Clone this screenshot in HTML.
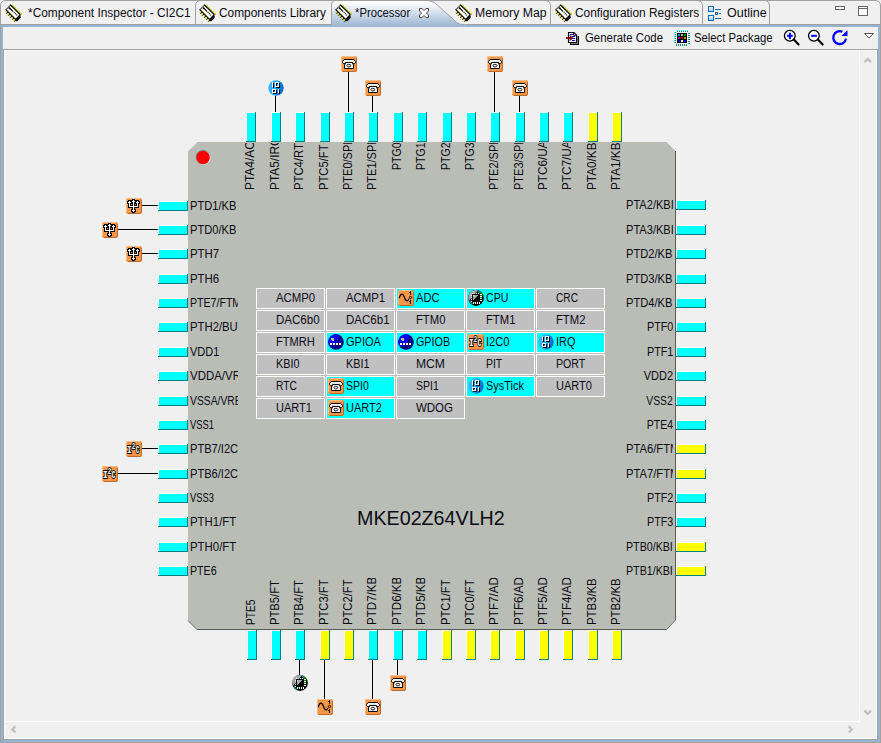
<!DOCTYPE html><html><head><meta charset="utf-8"><title>Processor</title>
<style>
html,body{margin:0;padding:0}
body{width:881px;height:743px;overflow:hidden;background:#f0f0f0;position:relative;font-family:"Liberation Sans",sans-serif;font-size:12px;color:#0b0b14}
#g{position:absolute;left:0;top:0}
.t{position:absolute;white-space:nowrap;line-height:14px;height:14px}
.pl{position:absolute;white-space:nowrap;line-height:14px;height:14px;width:47px;overflow:hidden}
.r{text-align:right}
.s{display:inline-block;transform-origin:0 0;white-space:nowrap;text-indent:0}
.r .s{transform-origin:100% 0}
.v{transform-origin:0 0;transform:rotate(-90deg)}
.big{position:absolute;white-space:nowrap;font-size:20.6px;line-height:24px}
</style></head><body>
<svg id="g" width="881" height="743" viewBox="0 0 881 743">
<defs><linearGradient id="tabg" x1="0" x2="0" y1="0" y2="1"><stop offset="0" stop-color="#ffffff"/><stop offset="0.15" stop-color="#f4f7fb"/><stop offset="1" stop-color="#99b4d1"/></linearGradient></defs>
<g shape-rendering="crispEdges">
<rect x="1" y="25" width="879" height="2" fill="#99b4d1"/><rect x="1" y="25" width="2" height="716" fill="#99b4d1"/><rect x="878" y="25" width="2" height="716" fill="#99b4d1"/><rect x="1" y="740" width="879" height="2" fill="#99b4d1"/>
<rect x="0" y="6" width="1" height="737" fill="#a0a0a0"/><rect x="880" y="6" width="1" height="737" fill="#a0a0a0"/><rect x="0" y="742" width="881" height="1" fill="#a0a0a0"/>
<rect x="0" y="24" width="332" height="1" fill="#a0a0a0"/><rect x="462" y="24" width="419" height="1" fill="#a0a0a0"/>
<rect x="3" y="49" width="875" height="1" fill="#a0a0a0"/><rect x="3" y="49" width="1" height="691" fill="#a0a0a0"/>
<rect x="4" y="50" width="873" height="1" fill="#fff"/><rect x="4" y="50" width="1" height="689" fill="#fff"/>
<rect x="876" y="50" width="1" height="689" fill="#fff"/><rect x="4" y="738" width="873" height="1" fill="#fff"/>
<rect x="877" y="49" width="1" height="691" fill="#a0a0a0"/><rect x="3" y="739" width="875" height="1" fill="#a0a0a0"/>
<rect x="859" y="51" width="1" height="671" fill="#fff"/><rect x="5" y="721" width="855" height="1" fill="#fff"/>
</g>
<path d="M0.5 7V6Q0.5 0.5 6 0.5H875Q880.5 0.5 880.5 6V7" fill="none" stroke="#a0a0a0" stroke-width="1"/>
<path d="M331.5 27V5Q331.5 1 336 1H426C433 1 436 3.5 440.5 8L452.5 18.5C456.5 22.5 458.5 24.5 464.5 24.5H466V27Z" fill="url(#tabg)"/>
<path d="M331.5 24.5V5Q331.5 0.5 336 0.5" fill="none" stroke="#a0a0a0"/>
<path d="M425 0.5C433 0.5 436 3.5 440.5 8L452.5 18.5C456.5 22.5 458.5 24.5 464.5 24.5" fill="none" stroke="#a0a0a0"/>
<path d="M195.5 24V6Q195.5 0.5 201 0.5" fill="none" stroke="#a0a0a0"/>
<path d="M550.5 24V6Q550.5 0.5 545.0 0.5" fill="none" stroke="#a0a0a0"/>
<path d="M702.5 24V6Q702.5 0.5 697.0 0.5" fill="none" stroke="#a0a0a0"/>
<path d="M769.5 24V6Q769.5 0.5 764.0 0.5" fill="none" stroke="#a0a0a0"/>
<g transform="translate(5 4.5)"><g><path d="M6.70 0.70l1.8 0l0 1.8z" fill="#d4d400" stroke="#c0c000" stroke-width="0.5"/><path d="M8.70 2.70l1.8 0l0 1.8z" fill="#d4d400" stroke="#c0c000" stroke-width="0.5"/><path d="M10.70 4.70l1.8 0l0 1.8z" fill="#d4d400" stroke="#c0c000" stroke-width="0.5"/><path d="M12.70 6.70l1.8 0l0 1.8z" fill="#d4d400" stroke="#c0c000" stroke-width="0.5"/><path d="M14.70 8.70l1.8 0l0 1.8z" fill="#d4d400" stroke="#c0c000" stroke-width="0.5"/><path d="M0.9 5.2L0.9 7.0L10.6 16.7L12.4 16.7L15.9 13.0L15.2 10.4L10.8 14.8Z" fill="#15151f"/><path d="M5.5 0.5L0.9 5.2L10.6 14.8L15.2 10.2Z" fill="#fff" stroke="#000" stroke-width="1.1" stroke-linejoin="round"/><path d="M4.9 1.1L1.5 4.6" stroke="#fff" stroke-width="1.2" stroke-dasharray="0.7 0.75"/><path d="M4.9 3.9L12.4 11.2" stroke="#000" stroke-width="1.1" stroke-dasharray="4.6 0.8 1 0.8 1 0.8 1 0.8"/><rect x="3.7" y="3" width="2" height="1.6" fill="#000" transform="rotate(45 4.7 3.8)"/><rect x="0.85" y="6.60" width="1.1" height="1.9" fill="#f0f000"/><rect x="0.85" y="8.30" width="1.1" height="1.1" fill="#4a4a00"/><rect x="2.85" y="8.60" width="1.1" height="1.9" fill="#f0f000"/><rect x="2.85" y="10.30" width="1.1" height="1.1" fill="#4a4a00"/><rect x="4.85" y="10.60" width="1.1" height="1.9" fill="#f0f000"/><rect x="4.85" y="12.30" width="1.1" height="1.1" fill="#4a4a00"/><rect x="6.85" y="12.60" width="1.1" height="1.9" fill="#f0f000"/><rect x="6.85" y="14.30" width="1.1" height="1.1" fill="#4a4a00"/><rect x="8.85" y="14.60" width="1.1" height="1.9" fill="#f0f000"/><rect x="8.85" y="16.30" width="1.1" height="1.1" fill="#4a4a00"/></g></g>
<g transform="translate(199 4.5)"><g><path d="M6.70 0.70l1.8 0l0 1.8z" fill="#d4d400" stroke="#c0c000" stroke-width="0.5"/><path d="M8.70 2.70l1.8 0l0 1.8z" fill="#d4d400" stroke="#c0c000" stroke-width="0.5"/><path d="M10.70 4.70l1.8 0l0 1.8z" fill="#d4d400" stroke="#c0c000" stroke-width="0.5"/><path d="M12.70 6.70l1.8 0l0 1.8z" fill="#d4d400" stroke="#c0c000" stroke-width="0.5"/><path d="M14.70 8.70l1.8 0l0 1.8z" fill="#d4d400" stroke="#c0c000" stroke-width="0.5"/><path d="M0.9 5.2L0.9 7.0L10.6 16.7L12.4 16.7L15.9 13.0L15.2 10.4L10.8 14.8Z" fill="#15151f"/><path d="M5.5 0.5L0.9 5.2L10.6 14.8L15.2 10.2Z" fill="#fff" stroke="#000" stroke-width="1.1" stroke-linejoin="round"/><path d="M4.9 1.1L1.5 4.6" stroke="#fff" stroke-width="1.2" stroke-dasharray="0.7 0.75"/><path d="M4.9 3.9L12.4 11.2" stroke="#000" stroke-width="1.1" stroke-dasharray="4.6 0.8 1 0.8 1 0.8 1 0.8"/><rect x="3.7" y="3" width="2" height="1.6" fill="#000" transform="rotate(45 4.7 3.8)"/><rect x="0.85" y="6.60" width="1.1" height="1.9" fill="#f0f000"/><rect x="0.85" y="8.30" width="1.1" height="1.1" fill="#4a4a00"/><rect x="2.85" y="8.60" width="1.1" height="1.9" fill="#f0f000"/><rect x="2.85" y="10.30" width="1.1" height="1.1" fill="#4a4a00"/><rect x="4.85" y="10.60" width="1.1" height="1.9" fill="#f0f000"/><rect x="4.85" y="12.30" width="1.1" height="1.1" fill="#4a4a00"/><rect x="6.85" y="12.60" width="1.1" height="1.9" fill="#f0f000"/><rect x="6.85" y="14.30" width="1.1" height="1.1" fill="#4a4a00"/><rect x="8.85" y="14.60" width="1.1" height="1.9" fill="#f0f000"/><rect x="8.85" y="16.30" width="1.1" height="1.1" fill="#4a4a00"/></g></g>
<g transform="translate(335 4.5)"><g><path d="M6.70 0.70l1.8 0l0 1.8z" fill="#d4d400" stroke="#c0c000" stroke-width="0.5"/><path d="M8.70 2.70l1.8 0l0 1.8z" fill="#d4d400" stroke="#c0c000" stroke-width="0.5"/><path d="M10.70 4.70l1.8 0l0 1.8z" fill="#d4d400" stroke="#c0c000" stroke-width="0.5"/><path d="M12.70 6.70l1.8 0l0 1.8z" fill="#d4d400" stroke="#c0c000" stroke-width="0.5"/><path d="M14.70 8.70l1.8 0l0 1.8z" fill="#d4d400" stroke="#c0c000" stroke-width="0.5"/><path d="M0.9 5.2L0.9 7.0L10.6 16.7L12.4 16.7L15.9 13.0L15.2 10.4L10.8 14.8Z" fill="#15151f"/><path d="M5.5 0.5L0.9 5.2L10.6 14.8L15.2 10.2Z" fill="#fff" stroke="#000" stroke-width="1.1" stroke-linejoin="round"/><path d="M4.9 1.1L1.5 4.6" stroke="#fff" stroke-width="1.2" stroke-dasharray="0.7 0.75"/><path d="M4.9 3.9L12.4 11.2" stroke="#000" stroke-width="1.1" stroke-dasharray="4.6 0.8 1 0.8 1 0.8 1 0.8"/><rect x="3.7" y="3" width="2" height="1.6" fill="#000" transform="rotate(45 4.7 3.8)"/><rect x="0.85" y="6.60" width="1.1" height="1.9" fill="#f0f000"/><rect x="0.85" y="8.30" width="1.1" height="1.1" fill="#4a4a00"/><rect x="2.85" y="8.60" width="1.1" height="1.9" fill="#f0f000"/><rect x="2.85" y="10.30" width="1.1" height="1.1" fill="#4a4a00"/><rect x="4.85" y="10.60" width="1.1" height="1.9" fill="#f0f000"/><rect x="4.85" y="12.30" width="1.1" height="1.1" fill="#4a4a00"/><rect x="6.85" y="12.60" width="1.1" height="1.9" fill="#f0f000"/><rect x="6.85" y="14.30" width="1.1" height="1.1" fill="#4a4a00"/><rect x="8.85" y="14.60" width="1.1" height="1.9" fill="#f0f000"/><rect x="8.85" y="16.30" width="1.1" height="1.1" fill="#4a4a00"/></g></g>
<g transform="translate(455 4.5)"><g><path d="M6.70 0.70l1.8 0l0 1.8z" fill="#d4d400" stroke="#c0c000" stroke-width="0.5"/><path d="M8.70 2.70l1.8 0l0 1.8z" fill="#d4d400" stroke="#c0c000" stroke-width="0.5"/><path d="M10.70 4.70l1.8 0l0 1.8z" fill="#d4d400" stroke="#c0c000" stroke-width="0.5"/><path d="M12.70 6.70l1.8 0l0 1.8z" fill="#d4d400" stroke="#c0c000" stroke-width="0.5"/><path d="M14.70 8.70l1.8 0l0 1.8z" fill="#d4d400" stroke="#c0c000" stroke-width="0.5"/><path d="M0.9 5.2L0.9 7.0L10.6 16.7L12.4 16.7L15.9 13.0L15.2 10.4L10.8 14.8Z" fill="#15151f"/><path d="M5.5 0.5L0.9 5.2L10.6 14.8L15.2 10.2Z" fill="#fff" stroke="#000" stroke-width="1.1" stroke-linejoin="round"/><path d="M4.9 1.1L1.5 4.6" stroke="#fff" stroke-width="1.2" stroke-dasharray="0.7 0.75"/><path d="M4.9 3.9L12.4 11.2" stroke="#000" stroke-width="1.1" stroke-dasharray="4.6 0.8 1 0.8 1 0.8 1 0.8"/><rect x="3.7" y="3" width="2" height="1.6" fill="#000" transform="rotate(45 4.7 3.8)"/><rect x="0.85" y="6.60" width="1.1" height="1.9" fill="#f0f000"/><rect x="0.85" y="8.30" width="1.1" height="1.1" fill="#4a4a00"/><rect x="2.85" y="8.60" width="1.1" height="1.9" fill="#f0f000"/><rect x="2.85" y="10.30" width="1.1" height="1.1" fill="#4a4a00"/><rect x="4.85" y="10.60" width="1.1" height="1.9" fill="#f0f000"/><rect x="4.85" y="12.30" width="1.1" height="1.1" fill="#4a4a00"/><rect x="6.85" y="12.60" width="1.1" height="1.9" fill="#f0f000"/><rect x="6.85" y="14.30" width="1.1" height="1.1" fill="#4a4a00"/><rect x="8.85" y="14.60" width="1.1" height="1.9" fill="#f0f000"/><rect x="8.85" y="16.30" width="1.1" height="1.1" fill="#4a4a00"/></g></g>
<g transform="translate(555 4.5)"><g><path d="M6.70 0.70l1.8 0l0 1.8z" fill="#d4d400" stroke="#c0c000" stroke-width="0.5"/><path d="M8.70 2.70l1.8 0l0 1.8z" fill="#d4d400" stroke="#c0c000" stroke-width="0.5"/><path d="M10.70 4.70l1.8 0l0 1.8z" fill="#d4d400" stroke="#c0c000" stroke-width="0.5"/><path d="M12.70 6.70l1.8 0l0 1.8z" fill="#d4d400" stroke="#c0c000" stroke-width="0.5"/><path d="M14.70 8.70l1.8 0l0 1.8z" fill="#d4d400" stroke="#c0c000" stroke-width="0.5"/><path d="M0.9 5.2L0.9 7.0L10.6 16.7L12.4 16.7L15.9 13.0L15.2 10.4L10.8 14.8Z" fill="#15151f"/><path d="M5.5 0.5L0.9 5.2L10.6 14.8L15.2 10.2Z" fill="#fff" stroke="#000" stroke-width="1.1" stroke-linejoin="round"/><path d="M4.9 1.1L1.5 4.6" stroke="#fff" stroke-width="1.2" stroke-dasharray="0.7 0.75"/><path d="M4.9 3.9L12.4 11.2" stroke="#000" stroke-width="1.1" stroke-dasharray="4.6 0.8 1 0.8 1 0.8 1 0.8"/><rect x="3.7" y="3" width="2" height="1.6" fill="#000" transform="rotate(45 4.7 3.8)"/><rect x="0.85" y="6.60" width="1.1" height="1.9" fill="#f0f000"/><rect x="0.85" y="8.30" width="1.1" height="1.1" fill="#4a4a00"/><rect x="2.85" y="8.60" width="1.1" height="1.9" fill="#f0f000"/><rect x="2.85" y="10.30" width="1.1" height="1.1" fill="#4a4a00"/><rect x="4.85" y="10.60" width="1.1" height="1.9" fill="#f0f000"/><rect x="4.85" y="12.30" width="1.1" height="1.1" fill="#4a4a00"/><rect x="6.85" y="12.60" width="1.1" height="1.9" fill="#f0f000"/><rect x="6.85" y="14.30" width="1.1" height="1.1" fill="#4a4a00"/><rect x="8.85" y="14.60" width="1.1" height="1.9" fill="#f0f000"/><rect x="8.85" y="16.30" width="1.1" height="1.1" fill="#4a4a00"/></g></g>
<defs><linearGradient id="olg" x1="0" y1="0" x2="0" y2="1"><stop offset="0" stop-color="#ffffff"/><stop offset="1" stop-color="#8fc4f7"/></linearGradient></defs><g transform="translate(708 6)" shape-rendering="crispEdges"><rect x="0.5" y="0.5" width="5" height="5" fill="url(#olg)" stroke="#1467b0"/><rect x="0.5" y="9.5" width="5" height="5" fill="url(#olg)" stroke="#1467b0"/><path d="M7 3.5H13M7 12.5H13M11 7.5H13" stroke="#2b6ca6" stroke-width="1"/><rect x="7.5" y="6.5" width="2" height="2" fill="#fff" stroke="#1467b0"/></g>
<path d="M419.5 8.5H422L424 10.5L426 8.5H428.5V11L426.5 13L428.5 15V17.5H426L424 15.5L422 17.5H419.5V15L421.5 13L419.5 11Z" fill="#fff" stroke="#4a4a4a" stroke-width="1" stroke-linejoin="miter"/>
<g shape-rendering="crispEdges"><rect x="835.5" y="6.5" width="9" height="3" fill="#fff" stroke="#666"/><rect x="858.5" y="6.5" width="9" height="9" fill="#fff" stroke="#666"/><rect x="858" y="8" width="10" height="1" fill="#666"/></g>
<g transform="translate(566 31)"><path d="M4.5 11V13.5H12.5V5.5L10.5 4V11.5Z" fill="#808080"/><path d="M4.5 12V13.5H12.5V5" fill="none" stroke="#000" stroke-width="1.1"/><path d="M2.5 1.5H8L10.5 4V11.5H2.5Z" fill="#fff" stroke="#000" stroke-width="1.1"/><path d="M7.5 1.8V4.3H10.2" fill="none" stroke="#000" stroke-width="0.9"/><path d="M4 3.5H7M6 5.5H9M6 7.5H9M6 9.5H9" stroke="#0000ff" stroke-width="1"/><path d="M0 7H6" stroke="#800000" stroke-width="1.8"/><path d="M3.6 3.8L7.2 7L3.6 10.2Z" fill="#800000"/></g>
<g transform="translate(674 30)" shape-rendering="crispEdges"><rect x="3" y="3" width="10" height="10" fill="#000"/><rect x="3" y="0" width="1" height="1" fill="#00ffff"/><rect x="3" y="1" width="1" height="1" fill="#008080"/><rect x="2" y="14" width="1" height="2" fill="#008080"/><rect x="0" y="2" width="1" height="1" fill="#00ffff"/><rect x="1" y="2" width="1" height="1" fill="#008080"/><rect x="14" y="3" width="2" height="1" fill="#008080"/><rect x="5" y="0" width="1" height="1" fill="#00ffff"/><rect x="5" y="1" width="1" height="1" fill="#008080"/><rect x="4" y="14" width="1" height="2" fill="#008080"/><rect x="0" y="4" width="1" height="1" fill="#00ffff"/><rect x="1" y="4" width="1" height="1" fill="#008080"/><rect x="14" y="5" width="2" height="1" fill="#008080"/><rect x="7" y="0" width="1" height="1" fill="#00ffff"/><rect x="7" y="1" width="1" height="1" fill="#008080"/><rect x="6" y="14" width="1" height="2" fill="#008080"/><rect x="0" y="6" width="1" height="1" fill="#00ffff"/><rect x="1" y="6" width="1" height="1" fill="#008080"/><rect x="14" y="7" width="2" height="1" fill="#008080"/><rect x="9" y="0" width="1" height="1" fill="#00ffff"/><rect x="9" y="1" width="1" height="1" fill="#008080"/><rect x="8" y="14" width="1" height="2" fill="#008080"/><rect x="0" y="8" width="1" height="1" fill="#00ffff"/><rect x="1" y="8" width="1" height="1" fill="#008080"/><rect x="14" y="9" width="2" height="1" fill="#008080"/><rect x="11" y="0" width="1" height="1" fill="#00ffff"/><rect x="11" y="1" width="1" height="1" fill="#008080"/><rect x="10" y="14" width="1" height="2" fill="#008080"/><rect x="0" y="10" width="1" height="1" fill="#00ffff"/><rect x="1" y="10" width="1" height="1" fill="#008080"/><rect x="14" y="11" width="2" height="1" fill="#008080"/><rect x="13" y="0" width="1" height="1" fill="#00ffff"/><rect x="13" y="1" width="1" height="1" fill="#008080"/><rect x="12" y="14" width="1" height="2" fill="#008080"/><rect x="0" y="12" width="1" height="1" fill="#00ffff"/><rect x="1" y="12" width="1" height="1" fill="#008080"/><rect x="14" y="13" width="2" height="1" fill="#008080"/><rect x="4" y="4" width="2" height="2" fill="#00a0a0"/><rect x="7" y="4" width="2" height="2" fill="#b4b4b4"/><rect x="10" y="4" width="2" height="2" fill="#00a000"/><rect x="4" y="7" width="2" height="2" fill="#a000a0"/><rect x="7" y="7" width="2" height="2" fill="#a00000"/><rect x="10" y="7" width="2" height="2" fill="#a0a000"/><rect x="4" y="10" width="2" height="2" fill="#0000a0"/><rect x="7" y="10" width="2" height="2" fill="#ffffff"/><rect x="10" y="10" width="2" height="2" fill="#0000ff"/></g>
<g transform="translate(784 30)"><circle cx="5.8" cy="5.8" r="5.35" fill="#fff" stroke="#000" stroke-width="1.3"/><path d="M9.8 9.6L14.6 14.6" stroke="#000" stroke-width="2.1" stroke-linecap="round"/><path d="M3 5.8H8.8" stroke="#0000ff" stroke-width="2"/><path d="M5.9 2.7V9.1" stroke="#0000ff" stroke-width="2"/></g>
<g transform="translate(808.1 30)"><circle cx="5.8" cy="5.8" r="5.35" fill="#fff" stroke="#000" stroke-width="1.3"/><path d="M9.8 9.6L14.6 14.6" stroke="#000" stroke-width="2.1" stroke-linecap="round"/><path d="M3 5.8H8.8" stroke="#0000ff" stroke-width="2"/></g>
<g transform="translate(832 30)"><path d="M14 8.6A6.4 6.4 0 1 1 10.4 1.8" fill="none" stroke="#0000ff" stroke-width="2.3"/><path d="M9.4 6L15.5 0.2V6Z" fill="#0000ff"/></g>
<path d="M864.5 33.5H873.5L869 38Z" fill="#fff" stroke="#505050" stroke-width="1" stroke-linejoin="miter"/>
<g fill="none" stroke="#bfbfbf" stroke-width="2.2"><path d="M864.4 62.2L867.7 58.9L871 62.2"/><path d="M864.4 710.6L867.7 713.9L871 710.6"/><path d="M15.4 726.3L12.2 729.4L15.4 732.5"/><path d="M848.7 726.3L851.9 729.4L848.7 732.5"/></g>
<path d="M197.5 142H666.5L675 150.5V620L666 629H197L188 620V151.5Z" fill="#babdb6"/>
<path d="M675.5 151V620L666.5 629.5H197L188 620.5" fill="none" stroke="#5a5c58" stroke-width="1"/>
<circle cx="202.9" cy="157.3" r="7.2" fill="#4f8888"/><circle cx="203.5" cy="157.9" r="7.0" fill="#d2ecec"/><circle cx="203.1" cy="157.5" r="6.7" fill="#ff0000"/>
<g shape-rendering="crispEdges">
<rect x="246" y="112" width="10" height="30" fill="#00ffff"/><rect x="246" y="112" width="10" height="1" fill="#fff"/><rect x="246" y="112" width="1" height="30" fill="#fff"/><rect x="246" y="141" width="10" height="1" fill="#008080"/><rect x="255" y="112" width="1" height="30" fill="#008080"/>
<rect x="247" y="630" width="10" height="30" fill="#00ffff"/><rect x="247" y="630" width="10" height="1" fill="#fff"/><rect x="247" y="630" width="1" height="30" fill="#fff"/><rect x="247" y="659" width="10" height="1" fill="#008080"/><rect x="256" y="630" width="1" height="30" fill="#008080"/>
<rect x="158" y="201" width="30" height="10" fill="#00ffff"/><rect x="158" y="201" width="30" height="1" fill="#fff"/><rect x="158" y="201" width="1" height="10" fill="#fff"/><rect x="158" y="210" width="30" height="1" fill="#008080"/><rect x="187" y="201" width="1" height="10" fill="#008080"/>
<rect x="676" y="200" width="30" height="10" fill="#00ffff"/><rect x="676" y="200" width="30" height="1" fill="#fff"/><rect x="676" y="200" width="1" height="10" fill="#fff"/><rect x="676" y="209" width="30" height="1" fill="#008080"/><rect x="705" y="200" width="1" height="10" fill="#008080"/>
<rect x="271" y="112" width="10" height="30" fill="#00ffff"/><rect x="271" y="112" width="10" height="1" fill="#fff"/><rect x="271" y="112" width="1" height="30" fill="#fff"/><rect x="271" y="141" width="10" height="1" fill="#008080"/><rect x="280" y="112" width="1" height="30" fill="#008080"/>
<rect x="271" y="630" width="10" height="30" fill="#00ffff"/><rect x="271" y="630" width="10" height="1" fill="#fff"/><rect x="271" y="630" width="1" height="30" fill="#fff"/><rect x="271" y="659" width="10" height="1" fill="#008080"/><rect x="280" y="630" width="1" height="30" fill="#008080"/>
<rect x="158" y="225" width="30" height="10" fill="#00ffff"/><rect x="158" y="225" width="30" height="1" fill="#fff"/><rect x="158" y="225" width="1" height="10" fill="#fff"/><rect x="158" y="234" width="30" height="1" fill="#008080"/><rect x="187" y="225" width="1" height="10" fill="#008080"/>
<rect x="676" y="225" width="30" height="10" fill="#00ffff"/><rect x="676" y="225" width="30" height="1" fill="#fff"/><rect x="676" y="225" width="1" height="10" fill="#fff"/><rect x="676" y="234" width="30" height="1" fill="#008080"/><rect x="705" y="225" width="1" height="10" fill="#008080"/>
<rect x="295" y="112" width="10" height="30" fill="#00ffff"/><rect x="295" y="112" width="10" height="1" fill="#fff"/><rect x="295" y="112" width="1" height="30" fill="#fff"/><rect x="295" y="141" width="10" height="1" fill="#008080"/><rect x="304" y="112" width="1" height="30" fill="#008080"/>
<rect x="295" y="630" width="10" height="30" fill="#00ffff"/><rect x="295" y="630" width="10" height="1" fill="#fff"/><rect x="295" y="630" width="1" height="30" fill="#fff"/><rect x="295" y="659" width="10" height="1" fill="#008080"/><rect x="304" y="630" width="1" height="30" fill="#008080"/>
<rect x="158" y="249" width="30" height="10" fill="#00ffff"/><rect x="158" y="249" width="30" height="1" fill="#fff"/><rect x="158" y="249" width="1" height="10" fill="#fff"/><rect x="158" y="258" width="30" height="1" fill="#008080"/><rect x="187" y="249" width="1" height="10" fill="#008080"/>
<rect x="676" y="249" width="30" height="10" fill="#00ffff"/><rect x="676" y="249" width="30" height="1" fill="#fff"/><rect x="676" y="249" width="1" height="10" fill="#fff"/><rect x="676" y="258" width="30" height="1" fill="#008080"/><rect x="705" y="249" width="1" height="10" fill="#008080"/>
<rect x="320" y="112" width="10" height="30" fill="#00ffff"/><rect x="320" y="112" width="10" height="1" fill="#fff"/><rect x="320" y="112" width="1" height="30" fill="#fff"/><rect x="320" y="141" width="10" height="1" fill="#008080"/><rect x="329" y="112" width="1" height="30" fill="#008080"/>
<rect x="320" y="630" width="10" height="30" fill="#ffff00"/><rect x="320" y="630" width="10" height="1" fill="#fff"/><rect x="320" y="630" width="1" height="30" fill="#fff"/><rect x="320" y="659" width="10" height="1" fill="#008080"/><rect x="329" y="630" width="1" height="30" fill="#008080"/>
<rect x="158" y="274" width="30" height="10" fill="#00ffff"/><rect x="158" y="274" width="30" height="1" fill="#fff"/><rect x="158" y="274" width="1" height="10" fill="#fff"/><rect x="158" y="283" width="30" height="1" fill="#008080"/><rect x="187" y="274" width="1" height="10" fill="#008080"/>
<rect x="676" y="274" width="30" height="10" fill="#00ffff"/><rect x="676" y="274" width="30" height="1" fill="#fff"/><rect x="676" y="274" width="1" height="10" fill="#fff"/><rect x="676" y="283" width="30" height="1" fill="#008080"/><rect x="705" y="274" width="1" height="10" fill="#008080"/>
<rect x="344" y="112" width="10" height="30" fill="#00ffff"/><rect x="344" y="112" width="10" height="1" fill="#fff"/><rect x="344" y="112" width="1" height="30" fill="#fff"/><rect x="344" y="141" width="10" height="1" fill="#008080"/><rect x="353" y="112" width="1" height="30" fill="#008080"/>
<rect x="344" y="630" width="10" height="30" fill="#ffff00"/><rect x="344" y="630" width="10" height="1" fill="#fff"/><rect x="344" y="630" width="1" height="30" fill="#fff"/><rect x="344" y="659" width="10" height="1" fill="#008080"/><rect x="353" y="630" width="1" height="30" fill="#008080"/>
<rect x="158" y="298" width="30" height="10" fill="#00ffff"/><rect x="158" y="298" width="30" height="1" fill="#fff"/><rect x="158" y="298" width="1" height="10" fill="#fff"/><rect x="158" y="307" width="30" height="1" fill="#008080"/><rect x="187" y="298" width="1" height="10" fill="#008080"/>
<rect x="676" y="298" width="30" height="10" fill="#00ffff"/><rect x="676" y="298" width="30" height="1" fill="#fff"/><rect x="676" y="298" width="1" height="10" fill="#fff"/><rect x="676" y="307" width="30" height="1" fill="#008080"/><rect x="705" y="298" width="1" height="10" fill="#008080"/>
<rect x="368" y="112" width="10" height="30" fill="#00ffff"/><rect x="368" y="112" width="10" height="1" fill="#fff"/><rect x="368" y="112" width="1" height="30" fill="#fff"/><rect x="368" y="141" width="10" height="1" fill="#008080"/><rect x="377" y="112" width="1" height="30" fill="#008080"/>
<rect x="368" y="630" width="10" height="30" fill="#00ffff"/><rect x="368" y="630" width="10" height="1" fill="#fff"/><rect x="368" y="630" width="1" height="30" fill="#fff"/><rect x="368" y="659" width="10" height="1" fill="#008080"/><rect x="377" y="630" width="1" height="30" fill="#008080"/>
<rect x="158" y="322" width="30" height="10" fill="#00ffff"/><rect x="158" y="322" width="30" height="1" fill="#fff"/><rect x="158" y="322" width="1" height="10" fill="#fff"/><rect x="158" y="331" width="30" height="1" fill="#008080"/><rect x="187" y="322" width="1" height="10" fill="#008080"/>
<rect x="676" y="322" width="30" height="10" fill="#00ffff"/><rect x="676" y="322" width="30" height="1" fill="#fff"/><rect x="676" y="322" width="1" height="10" fill="#fff"/><rect x="676" y="331" width="30" height="1" fill="#008080"/><rect x="705" y="322" width="1" height="10" fill="#008080"/>
<rect x="393" y="112" width="10" height="30" fill="#00ffff"/><rect x="393" y="112" width="10" height="1" fill="#fff"/><rect x="393" y="112" width="1" height="30" fill="#fff"/><rect x="393" y="141" width="10" height="1" fill="#008080"/><rect x="402" y="112" width="1" height="30" fill="#008080"/>
<rect x="393" y="630" width="10" height="30" fill="#00ffff"/><rect x="393" y="630" width="10" height="1" fill="#fff"/><rect x="393" y="630" width="1" height="30" fill="#fff"/><rect x="393" y="659" width="10" height="1" fill="#008080"/><rect x="402" y="630" width="1" height="30" fill="#008080"/>
<rect x="158" y="347" width="30" height="10" fill="#00ffff"/><rect x="158" y="347" width="30" height="1" fill="#fff"/><rect x="158" y="347" width="1" height="10" fill="#fff"/><rect x="158" y="356" width="30" height="1" fill="#008080"/><rect x="187" y="347" width="1" height="10" fill="#008080"/>
<rect x="676" y="347" width="30" height="10" fill="#00ffff"/><rect x="676" y="347" width="30" height="1" fill="#fff"/><rect x="676" y="347" width="1" height="10" fill="#fff"/><rect x="676" y="356" width="30" height="1" fill="#008080"/><rect x="705" y="347" width="1" height="10" fill="#008080"/>
<rect x="417" y="112" width="10" height="30" fill="#00ffff"/><rect x="417" y="112" width="10" height="1" fill="#fff"/><rect x="417" y="112" width="1" height="30" fill="#fff"/><rect x="417" y="141" width="10" height="1" fill="#008080"/><rect x="426" y="112" width="1" height="30" fill="#008080"/>
<rect x="417" y="630" width="10" height="30" fill="#00ffff"/><rect x="417" y="630" width="10" height="1" fill="#fff"/><rect x="417" y="630" width="1" height="30" fill="#fff"/><rect x="417" y="659" width="10" height="1" fill="#008080"/><rect x="426" y="630" width="1" height="30" fill="#008080"/>
<rect x="158" y="371" width="30" height="10" fill="#00ffff"/><rect x="158" y="371" width="30" height="1" fill="#fff"/><rect x="158" y="371" width="1" height="10" fill="#fff"/><rect x="158" y="380" width="30" height="1" fill="#008080"/><rect x="187" y="371" width="1" height="10" fill="#008080"/>
<rect x="676" y="371" width="30" height="10" fill="#00ffff"/><rect x="676" y="371" width="30" height="1" fill="#fff"/><rect x="676" y="371" width="1" height="10" fill="#fff"/><rect x="676" y="380" width="30" height="1" fill="#008080"/><rect x="705" y="371" width="1" height="10" fill="#008080"/>
<rect x="442" y="112" width="10" height="30" fill="#00ffff"/><rect x="442" y="112" width="10" height="1" fill="#fff"/><rect x="442" y="112" width="1" height="30" fill="#fff"/><rect x="442" y="141" width="10" height="1" fill="#008080"/><rect x="451" y="112" width="1" height="30" fill="#008080"/>
<rect x="442" y="630" width="10" height="30" fill="#ffff00"/><rect x="442" y="630" width="10" height="1" fill="#fff"/><rect x="442" y="630" width="1" height="30" fill="#fff"/><rect x="442" y="659" width="10" height="1" fill="#008080"/><rect x="451" y="630" width="1" height="30" fill="#008080"/>
<rect x="158" y="396" width="30" height="10" fill="#00ffff"/><rect x="158" y="396" width="30" height="1" fill="#fff"/><rect x="158" y="396" width="1" height="10" fill="#fff"/><rect x="158" y="405" width="30" height="1" fill="#008080"/><rect x="187" y="396" width="1" height="10" fill="#008080"/>
<rect x="676" y="396" width="30" height="10" fill="#00ffff"/><rect x="676" y="396" width="30" height="1" fill="#fff"/><rect x="676" y="396" width="1" height="10" fill="#fff"/><rect x="676" y="405" width="30" height="1" fill="#008080"/><rect x="705" y="396" width="1" height="10" fill="#008080"/>
<rect x="466" y="112" width="10" height="30" fill="#00ffff"/><rect x="466" y="112" width="10" height="1" fill="#fff"/><rect x="466" y="112" width="1" height="30" fill="#fff"/><rect x="466" y="141" width="10" height="1" fill="#008080"/><rect x="475" y="112" width="1" height="30" fill="#008080"/>
<rect x="466" y="630" width="10" height="30" fill="#ffff00"/><rect x="466" y="630" width="10" height="1" fill="#fff"/><rect x="466" y="630" width="1" height="30" fill="#fff"/><rect x="466" y="659" width="10" height="1" fill="#008080"/><rect x="475" y="630" width="1" height="30" fill="#008080"/>
<rect x="158" y="420" width="30" height="10" fill="#00ffff"/><rect x="158" y="420" width="30" height="1" fill="#fff"/><rect x="158" y="420" width="1" height="10" fill="#fff"/><rect x="158" y="429" width="30" height="1" fill="#008080"/><rect x="187" y="420" width="1" height="10" fill="#008080"/>
<rect x="676" y="420" width="30" height="10" fill="#00ffff"/><rect x="676" y="420" width="30" height="1" fill="#fff"/><rect x="676" y="420" width="1" height="10" fill="#fff"/><rect x="676" y="429" width="30" height="1" fill="#008080"/><rect x="705" y="420" width="1" height="10" fill="#008080"/>
<rect x="490" y="112" width="10" height="30" fill="#00ffff"/><rect x="490" y="112" width="10" height="1" fill="#fff"/><rect x="490" y="112" width="1" height="30" fill="#fff"/><rect x="490" y="141" width="10" height="1" fill="#008080"/><rect x="499" y="112" width="1" height="30" fill="#008080"/>
<rect x="490" y="630" width="10" height="30" fill="#ffff00"/><rect x="490" y="630" width="10" height="1" fill="#fff"/><rect x="490" y="630" width="1" height="30" fill="#fff"/><rect x="490" y="659" width="10" height="1" fill="#008080"/><rect x="499" y="630" width="1" height="30" fill="#008080"/>
<rect x="158" y="444" width="30" height="10" fill="#00ffff"/><rect x="158" y="444" width="30" height="1" fill="#fff"/><rect x="158" y="444" width="1" height="10" fill="#fff"/><rect x="158" y="453" width="30" height="1" fill="#008080"/><rect x="187" y="444" width="1" height="10" fill="#008080"/>
<rect x="676" y="444" width="30" height="10" fill="#ffff00"/><rect x="676" y="444" width="30" height="1" fill="#fff"/><rect x="676" y="444" width="1" height="10" fill="#fff"/><rect x="676" y="453" width="30" height="1" fill="#008080"/><rect x="705" y="444" width="1" height="10" fill="#008080"/>
<rect x="515" y="112" width="10" height="30" fill="#00ffff"/><rect x="515" y="112" width="10" height="1" fill="#fff"/><rect x="515" y="112" width="1" height="30" fill="#fff"/><rect x="515" y="141" width="10" height="1" fill="#008080"/><rect x="524" y="112" width="1" height="30" fill="#008080"/>
<rect x="515" y="630" width="10" height="30" fill="#ffff00"/><rect x="515" y="630" width="10" height="1" fill="#fff"/><rect x="515" y="630" width="1" height="30" fill="#fff"/><rect x="515" y="659" width="10" height="1" fill="#008080"/><rect x="524" y="630" width="1" height="30" fill="#008080"/>
<rect x="158" y="469" width="30" height="10" fill="#00ffff"/><rect x="158" y="469" width="30" height="1" fill="#fff"/><rect x="158" y="469" width="1" height="10" fill="#fff"/><rect x="158" y="478" width="30" height="1" fill="#008080"/><rect x="187" y="469" width="1" height="10" fill="#008080"/>
<rect x="676" y="469" width="30" height="10" fill="#ffff00"/><rect x="676" y="469" width="30" height="1" fill="#fff"/><rect x="676" y="469" width="1" height="10" fill="#fff"/><rect x="676" y="478" width="30" height="1" fill="#008080"/><rect x="705" y="469" width="1" height="10" fill="#008080"/>
<rect x="539" y="112" width="10" height="30" fill="#00ffff"/><rect x="539" y="112" width="10" height="1" fill="#fff"/><rect x="539" y="112" width="1" height="30" fill="#fff"/><rect x="539" y="141" width="10" height="1" fill="#008080"/><rect x="548" y="112" width="1" height="30" fill="#008080"/>
<rect x="539" y="630" width="10" height="30" fill="#ffff00"/><rect x="539" y="630" width="10" height="1" fill="#fff"/><rect x="539" y="630" width="1" height="30" fill="#fff"/><rect x="539" y="659" width="10" height="1" fill="#008080"/><rect x="548" y="630" width="1" height="30" fill="#008080"/>
<rect x="158" y="493" width="30" height="10" fill="#00ffff"/><rect x="158" y="493" width="30" height="1" fill="#fff"/><rect x="158" y="493" width="1" height="10" fill="#fff"/><rect x="158" y="502" width="30" height="1" fill="#008080"/><rect x="187" y="493" width="1" height="10" fill="#008080"/>
<rect x="676" y="493" width="30" height="10" fill="#00ffff"/><rect x="676" y="493" width="30" height="1" fill="#fff"/><rect x="676" y="493" width="1" height="10" fill="#fff"/><rect x="676" y="502" width="30" height="1" fill="#008080"/><rect x="705" y="493" width="1" height="10" fill="#008080"/>
<rect x="563" y="112" width="10" height="30" fill="#00ffff"/><rect x="563" y="112" width="10" height="1" fill="#fff"/><rect x="563" y="112" width="1" height="30" fill="#fff"/><rect x="563" y="141" width="10" height="1" fill="#008080"/><rect x="572" y="112" width="1" height="30" fill="#008080"/>
<rect x="563" y="630" width="10" height="30" fill="#ffff00"/><rect x="563" y="630" width="10" height="1" fill="#fff"/><rect x="563" y="630" width="1" height="30" fill="#fff"/><rect x="563" y="659" width="10" height="1" fill="#008080"/><rect x="572" y="630" width="1" height="30" fill="#008080"/>
<rect x="158" y="517" width="30" height="10" fill="#00ffff"/><rect x="158" y="517" width="30" height="1" fill="#fff"/><rect x="158" y="517" width="1" height="10" fill="#fff"/><rect x="158" y="526" width="30" height="1" fill="#008080"/><rect x="187" y="517" width="1" height="10" fill="#008080"/>
<rect x="676" y="517" width="30" height="10" fill="#00ffff"/><rect x="676" y="517" width="30" height="1" fill="#fff"/><rect x="676" y="517" width="1" height="10" fill="#fff"/><rect x="676" y="526" width="30" height="1" fill="#008080"/><rect x="705" y="517" width="1" height="10" fill="#008080"/>
<rect x="588" y="112" width="10" height="30" fill="#ffff00"/><rect x="588" y="112" width="10" height="1" fill="#fff"/><rect x="588" y="112" width="1" height="30" fill="#fff"/><rect x="588" y="141" width="10" height="1" fill="#008080"/><rect x="597" y="112" width="1" height="30" fill="#008080"/>
<rect x="588" y="630" width="10" height="30" fill="#ffff00"/><rect x="588" y="630" width="10" height="1" fill="#fff"/><rect x="588" y="630" width="1" height="30" fill="#fff"/><rect x="588" y="659" width="10" height="1" fill="#008080"/><rect x="597" y="630" width="1" height="30" fill="#008080"/>
<rect x="158" y="542" width="30" height="10" fill="#00ffff"/><rect x="158" y="542" width="30" height="1" fill="#fff"/><rect x="158" y="542" width="1" height="10" fill="#fff"/><rect x="158" y="551" width="30" height="1" fill="#008080"/><rect x="187" y="542" width="1" height="10" fill="#008080"/>
<rect x="676" y="542" width="30" height="10" fill="#ffff00"/><rect x="676" y="542" width="30" height="1" fill="#fff"/><rect x="676" y="542" width="1" height="10" fill="#fff"/><rect x="676" y="551" width="30" height="1" fill="#008080"/><rect x="705" y="542" width="1" height="10" fill="#008080"/>
<rect x="612" y="112" width="10" height="30" fill="#ffff00"/><rect x="612" y="112" width="10" height="1" fill="#fff"/><rect x="612" y="112" width="1" height="30" fill="#fff"/><rect x="612" y="141" width="10" height="1" fill="#008080"/><rect x="621" y="112" width="1" height="30" fill="#008080"/>
<rect x="612" y="630" width="10" height="30" fill="#ffff00"/><rect x="612" y="630" width="10" height="1" fill="#fff"/><rect x="612" y="630" width="1" height="30" fill="#fff"/><rect x="612" y="659" width="10" height="1" fill="#008080"/><rect x="621" y="630" width="1" height="30" fill="#008080"/>
<rect x="158" y="566" width="30" height="10" fill="#00ffff"/><rect x="158" y="566" width="30" height="1" fill="#fff"/><rect x="158" y="566" width="1" height="10" fill="#fff"/><rect x="158" y="575" width="30" height="1" fill="#008080"/><rect x="187" y="566" width="1" height="10" fill="#008080"/>
<rect x="676" y="566" width="30" height="10" fill="#ffff00"/><rect x="676" y="566" width="30" height="1" fill="#fff"/><rect x="676" y="566" width="1" height="10" fill="#fff"/><rect x="676" y="575" width="30" height="1" fill="#008080"/><rect x="705" y="566" width="1" height="10" fill="#008080"/>
<rect x="275" y="96" width="1" height="16" fill="#000"/>
<rect x="348" y="72" width="1" height="40" fill="#000"/>
<rect x="372" y="96" width="1" height="16" fill="#000"/>
<rect x="494" y="72" width="1" height="40" fill="#000"/>
<rect x="519" y="96" width="1" height="16" fill="#000"/>
<rect x="299" y="660" width="1" height="15" fill="#000"/>
<rect x="324" y="660" width="1" height="39" fill="#000"/>
<rect x="372" y="660" width="1" height="39" fill="#000"/>
<rect x="397" y="660" width="1" height="15" fill="#000"/>
<rect x="142" y="205" width="16" height="1" fill="#000"/>
<rect x="118" y="229" width="40" height="1" fill="#000"/>
<rect x="142" y="253" width="16" height="1" fill="#000"/>
<rect x="142" y="448" width="16" height="1" fill="#000"/>
<rect x="118" y="473" width="40" height="1" fill="#000"/>
<rect x="256" y="288" width="69" height="21" fill="#fff"/><rect x="257" y="289" width="67" height="19" fill="#c0c0c0"/>
<rect x="326" y="288" width="69" height="21" fill="#fff"/><rect x="327" y="289" width="67" height="19" fill="#c0c0c0"/>
<rect x="396" y="288" width="69" height="21" fill="#fff"/><rect x="397" y="289" width="67" height="19" fill="#00ffff"/>
<rect x="466" y="288" width="69" height="21" fill="#fff"/><rect x="467" y="289" width="67" height="19" fill="#00ffff"/>
<rect x="536" y="288" width="69" height="21" fill="#fff"/><rect x="537" y="289" width="67" height="19" fill="#c0c0c0"/>
<rect x="256" y="310" width="69" height="21" fill="#fff"/><rect x="257" y="311" width="67" height="19" fill="#c0c0c0"/>
<rect x="326" y="310" width="69" height="21" fill="#fff"/><rect x="327" y="311" width="67" height="19" fill="#c0c0c0"/>
<rect x="396" y="310" width="69" height="21" fill="#fff"/><rect x="397" y="311" width="67" height="19" fill="#c0c0c0"/>
<rect x="466" y="310" width="69" height="21" fill="#fff"/><rect x="467" y="311" width="67" height="19" fill="#c0c0c0"/>
<rect x="536" y="310" width="69" height="21" fill="#fff"/><rect x="537" y="311" width="67" height="19" fill="#c0c0c0"/>
<rect x="256" y="332" width="69" height="21" fill="#fff"/><rect x="257" y="333" width="67" height="19" fill="#c0c0c0"/>
<rect x="326" y="332" width="69" height="21" fill="#fff"/><rect x="327" y="333" width="67" height="19" fill="#00ffff"/>
<rect x="396" y="332" width="69" height="21" fill="#fff"/><rect x="397" y="333" width="67" height="19" fill="#00ffff"/>
<rect x="466" y="332" width="69" height="21" fill="#fff"/><rect x="467" y="333" width="67" height="19" fill="#00ffff"/>
<rect x="536" y="332" width="69" height="21" fill="#fff"/><rect x="537" y="333" width="67" height="19" fill="#00ffff"/>
<rect x="256" y="354" width="69" height="21" fill="#fff"/><rect x="257" y="355" width="67" height="19" fill="#c0c0c0"/>
<rect x="326" y="354" width="69" height="21" fill="#fff"/><rect x="327" y="355" width="67" height="19" fill="#c0c0c0"/>
<rect x="396" y="354" width="69" height="21" fill="#fff"/><rect x="397" y="355" width="67" height="19" fill="#c0c0c0"/>
<rect x="466" y="354" width="69" height="21" fill="#fff"/><rect x="467" y="355" width="67" height="19" fill="#c0c0c0"/>
<rect x="536" y="354" width="69" height="21" fill="#fff"/><rect x="537" y="355" width="67" height="19" fill="#c0c0c0"/>
<rect x="256" y="376" width="69" height="21" fill="#fff"/><rect x="257" y="377" width="67" height="19" fill="#c0c0c0"/>
<rect x="326" y="376" width="69" height="21" fill="#fff"/><rect x="327" y="377" width="67" height="19" fill="#00ffff"/>
<rect x="396" y="376" width="69" height="21" fill="#fff"/><rect x="397" y="377" width="67" height="19" fill="#c0c0c0"/>
<rect x="466" y="376" width="69" height="21" fill="#fff"/><rect x="467" y="377" width="67" height="19" fill="#00ffff"/>
<rect x="536" y="376" width="69" height="21" fill="#fff"/><rect x="537" y="377" width="67" height="19" fill="#c0c0c0"/>
<rect x="256" y="398" width="69" height="21" fill="#fff"/><rect x="257" y="399" width="67" height="19" fill="#c0c0c0"/>
<rect x="326" y="398" width="69" height="21" fill="#fff"/><rect x="327" y="399" width="67" height="19" fill="#00ffff"/>
<rect x="396" y="398" width="69" height="21" fill="#fff"/><rect x="397" y="399" width="67" height="19" fill="#c0c0c0"/>
</g>
<g transform="translate(268 80)"><defs><linearGradient id="gia" x1="0" x2="1" y1="0" y2="0.25"><stop offset="0" stop-color="#3cbcff"/><stop offset="0.6" stop-color="#22a8f2"/><stop offset="0.72" stop-color="#0f86dc"/><stop offset="1" stop-color="#0a6ad0"/></linearGradient></defs><circle cx="8" cy="8" r="7.7" fill="url(#gia)"/><g shape-rendering="crispEdges"><g fill="#000"><rect x="5" y="3" width="1" height="5"/><rect x="8" y="3" width="4" height="5"/><rect x="5" y="10" width="4" height="4"/><rect x="11" y="10" width="1" height="4"/></g><g fill="#fff"><rect x="4" y="2" width="1" height="5"/><rect x="7" y="2" width="4" height="5"/><rect x="4" y="9" width="4" height="4"/><rect x="10" y="9" width="1" height="4"/></g><rect x="8" y="3" width="2" height="3" fill="#000"/><rect x="9" y="4" width="1" height="2" fill="#22a8f2"/><rect x="5" y="10" width="2" height="2" fill="#000"/><rect x="6" y="11" width="1" height="1" fill="#22a8f2"/></g></g>
<g transform="translate(341 56)"><rect x="0" y="0" width="16" height="16" rx="2" fill="#f79646"/><path d="M0.5 14V2.2Q0.5 0.5 2.2 0.5H14" fill="none" stroke="#fbbf8e" stroke-width="1"/><path d="M15.5 2V13.8Q15.5 15.5 13.8 15.5H2" fill="none" stroke="#b8692c" stroke-width="1"/><path d="M4.6 6.4H11.4L12.5 9V12.5H3.5V9Z" fill="#fff" stroke="#000" stroke-width="1" stroke-linejoin="round"/><path d="M3.2 3.5H12.6L14.5 5.4V6.6L13.2 7.7H11.7L11.4 6.4H4.6L4.3 7.7H2.8L1.5 6.6V5.4Z" fill="#fff" stroke="#000" stroke-width="1" stroke-linejoin="round"/><ellipse cx="7.9" cy="9.6" rx="1.9" ry="1.35" fill="#fff" stroke="#000" stroke-width="0.9"/></g>
<g transform="translate(365 80)"><rect x="0" y="0" width="16" height="16" rx="2" fill="#f79646"/><path d="M0.5 14V2.2Q0.5 0.5 2.2 0.5H14" fill="none" stroke="#fbbf8e" stroke-width="1"/><path d="M15.5 2V13.8Q15.5 15.5 13.8 15.5H2" fill="none" stroke="#b8692c" stroke-width="1"/><path d="M4.6 6.4H11.4L12.5 9V12.5H3.5V9Z" fill="#fff" stroke="#000" stroke-width="1" stroke-linejoin="round"/><path d="M3.2 3.5H12.6L14.5 5.4V6.6L13.2 7.7H11.7L11.4 6.4H4.6L4.3 7.7H2.8L1.5 6.6V5.4Z" fill="#fff" stroke="#000" stroke-width="1" stroke-linejoin="round"/><ellipse cx="7.9" cy="9.6" rx="1.9" ry="1.35" fill="#fff" stroke="#000" stroke-width="0.9"/></g>
<g transform="translate(487 56)"><rect x="0" y="0" width="16" height="16" rx="2" fill="#f79646"/><path d="M0.5 14V2.2Q0.5 0.5 2.2 0.5H14" fill="none" stroke="#fbbf8e" stroke-width="1"/><path d="M15.5 2V13.8Q15.5 15.5 13.8 15.5H2" fill="none" stroke="#b8692c" stroke-width="1"/><path d="M4.6 6.4H11.4L12.5 9V12.5H3.5V9Z" fill="#fff" stroke="#000" stroke-width="1" stroke-linejoin="round"/><path d="M3.2 3.5H12.6L14.5 5.4V6.6L13.2 7.7H11.7L11.4 6.4H4.6L4.3 7.7H2.8L1.5 6.6V5.4Z" fill="#fff" stroke="#000" stroke-width="1" stroke-linejoin="round"/><ellipse cx="7.9" cy="9.6" rx="1.9" ry="1.35" fill="#fff" stroke="#000" stroke-width="0.9"/></g>
<g transform="translate(512 80)"><rect x="0" y="0" width="16" height="16" rx="2" fill="#f79646"/><path d="M0.5 14V2.2Q0.5 0.5 2.2 0.5H14" fill="none" stroke="#fbbf8e" stroke-width="1"/><path d="M15.5 2V13.8Q15.5 15.5 13.8 15.5H2" fill="none" stroke="#b8692c" stroke-width="1"/><path d="M4.6 6.4H11.4L12.5 9V12.5H3.5V9Z" fill="#fff" stroke="#000" stroke-width="1" stroke-linejoin="round"/><path d="M3.2 3.5H12.6L14.5 5.4V6.6L13.2 7.7H11.7L11.4 6.4H4.6L4.3 7.7H2.8L1.5 6.6V5.4Z" fill="#fff" stroke="#000" stroke-width="1" stroke-linejoin="round"/><ellipse cx="7.9" cy="9.6" rx="1.9" ry="1.35" fill="#fff" stroke="#000" stroke-width="0.9"/></g>
<g transform="translate(365 699)"><rect x="0" y="0" width="16" height="16" rx="2" fill="#f79646"/><path d="M0.5 14V2.2Q0.5 0.5 2.2 0.5H14" fill="none" stroke="#fbbf8e" stroke-width="1"/><path d="M15.5 2V13.8Q15.5 15.5 13.8 15.5H2" fill="none" stroke="#b8692c" stroke-width="1"/><path d="M4.6 6.4H11.4L12.5 9V12.5H3.5V9Z" fill="#fff" stroke="#000" stroke-width="1" stroke-linejoin="round"/><path d="M3.2 3.5H12.6L14.5 5.4V6.6L13.2 7.7H11.7L11.4 6.4H4.6L4.3 7.7H2.8L1.5 6.6V5.4Z" fill="#fff" stroke="#000" stroke-width="1" stroke-linejoin="round"/><ellipse cx="7.9" cy="9.6" rx="1.9" ry="1.35" fill="#fff" stroke="#000" stroke-width="0.9"/></g>
<g transform="translate(390 675)"><rect x="0" y="0" width="16" height="16" rx="2" fill="#f79646"/><path d="M0.5 14V2.2Q0.5 0.5 2.2 0.5H14" fill="none" stroke="#fbbf8e" stroke-width="1"/><path d="M15.5 2V13.8Q15.5 15.5 13.8 15.5H2" fill="none" stroke="#b8692c" stroke-width="1"/><path d="M4.6 6.4H11.4L12.5 9V12.5H3.5V9Z" fill="#fff" stroke="#000" stroke-width="1" stroke-linejoin="round"/><path d="M3.2 3.5H12.6L14.5 5.4V6.6L13.2 7.7H11.7L11.4 6.4H4.6L4.3 7.7H2.8L1.5 6.6V5.4Z" fill="#fff" stroke="#000" stroke-width="1" stroke-linejoin="round"/><ellipse cx="7.9" cy="9.6" rx="1.9" ry="1.35" fill="#fff" stroke="#000" stroke-width="0.9"/></g>
<g transform="translate(292 675)"><defs><clipPath id="cca"><circle cx="8" cy="8" r="7.9"/></clipPath><linearGradient id="gca" x1="0" y1="0" x2="0.6" y2="0.8"><stop offset="0" stop-color="#d0d0d0"/><stop offset="1" stop-color="#808080"/></linearGradient></defs><g clip-path="url(#cca)"><rect width="16" height="16" fill="#000"/><path d="M0 0H10.4L0.4 11.6H0Z" fill="url(#gca)"/><path d="M9.8 0.4L12 1V3.8H10.8V2.2H9.8Z" fill="#0a8a90"/><path d="M12 1L15.4 3.6L15.8 6H14.6V4.6L12 3.4Z" fill="#0a8a0a"/><rect x="15" y="10" width="1" height="1.4" fill="#0a8a0a"/><path d="M0.8 10.8L2.8 10.4V12L4.8 13.2L3 14.4Z" fill="#0a8a90"/><path d="M2.8 14L5 12.8V14L3.8 15Z" fill="#0a8a0a"/></g><g shape-rendering="crispEdges"><rect x="4" y="4" width="8" height="8" fill="#000"/><path d="M5 5H10V6H9V7H8V8H7V9H6V10H5Z" fill="#a8a8a8"/><rect x="5" y="5" width="1" height="1" fill="#fff"/><g fill="#fff"><rect x="4" y="3" width="1" height="1"/><rect x="3" y="5" width="1" height="1"/><rect x="12" y="4" width="2" height="1"/><rect x="5" y="12" width="1" height="2"/><rect x="6" y="3" width="1" height="1"/><rect x="3" y="7" width="1" height="1"/><rect x="12" y="6" width="2" height="1"/><rect x="7" y="12" width="1" height="2"/><rect x="8" y="3" width="1" height="1"/><rect x="3" y="9" width="1" height="1"/><rect x="12" y="8" width="2" height="1"/><rect x="9" y="12" width="1" height="2"/><rect x="10" y="3" width="1" height="1"/><rect x="3" y="11" width="1" height="1"/><rect x="12" y="10" width="2" height="1"/><rect x="11" y="12" width="1" height="2"/></g><g fill="#0a8a0a"><rect x="12" y="5" width="1.6" height="1"/><rect x="12" y="7" width="1.6" height="1"/><rect x="6" y="12" width="1" height="1"/></g></g></g>
<g transform="translate(317 699)"><rect x="0" y="0" width="16" height="16" rx="2" fill="#f79646"/><path d="M0.5 14V2.2Q0.5 0.5 2.2 0.5H14" fill="none" stroke="#fbbf8e" stroke-width="1"/><path d="M15.5 2V13.8Q15.5 15.5 13.8 15.5H2" fill="none" stroke="#b8692c" stroke-width="1"/><path d="M1.3 7.9Q2.5 4.2 4 4.2Q5.4 4.2 6.4 7.3Q7.6 10.8 9 10.8Q10 10.8 10.7 9.2" fill="none" stroke="#000" stroke-width="1.25" stroke-linecap="round"/><path d="M12.5 1.2V4.7M11 2.5H12.5M12.5 10.3V13.9M11 11.5H12.5" fill="none" stroke="#000" stroke-width="1"/><circle cx="12.5" cy="7.5" r="1.15" fill="none" stroke="#000" stroke-width="0.9"/></g>
<g transform="translate(126 198)"><rect x="0" y="0" width="16" height="16" rx="2" fill="#f79646"/><path d="M0.5 14V2.2Q0.5 0.5 2.2 0.5H14" fill="none" stroke="#fbbf8e" stroke-width="1"/><path d="M15.5 2V13.8Q15.5 15.5 13.8 15.5H2" fill="none" stroke="#b8692c" stroke-width="1"/><g shape-rendering="crispEdges"><rect x="6" y="1" width="3" height="1" fill="#000"/><rect x="2" y="2" width="5" height="1" fill="#000"/><rect x="7" y="2" width="1" height="1" fill="#fff"/><rect x="8" y="2" width="5" height="1" fill="#000"/><rect x="1" y="3" width="2" height="1" fill="#000"/><rect x="3" y="3" width="1" height="1" fill="#fff"/><rect x="4" y="3" width="2" height="1" fill="#000"/><rect x="6" y="3" width="3" height="1" fill="#fff"/><rect x="9" y="3" width="2" height="1" fill="#000"/><rect x="11" y="3" width="1" height="1" fill="#fff"/><rect x="12" y="3" width="2" height="1" fill="#000"/><rect x="1" y="4" width="1" height="1" fill="#000"/><rect x="2" y="4" width="3" height="1" fill="#fff"/><rect x="5" y="4" width="2" height="1" fill="#000"/><rect x="7" y="4" width="1" height="1" fill="#fff"/><rect x="8" y="4" width="2" height="1" fill="#000"/><rect x="10" y="4" width="3" height="1" fill="#fff"/><rect x="13" y="4" width="1" height="1" fill="#000"/><rect x="1" y="5" width="2" height="1" fill="#000"/><rect x="3" y="5" width="1" height="1" fill="#fff"/><rect x="4" y="5" width="3" height="1" fill="#000"/><rect x="7" y="5" width="1" height="1" fill="#fff"/><rect x="8" y="5" width="3" height="1" fill="#000"/><rect x="11" y="5" width="1" height="1" fill="#fff"/><rect x="12" y="5" width="2" height="1" fill="#000"/><rect x="2" y="6" width="1" height="1" fill="#000"/><rect x="3" y="6" width="1" height="1" fill="#fff"/><rect x="4" y="6" width="1" height="1" fill="#000"/><rect x="6" y="6" width="1" height="1" fill="#000"/><rect x="7" y="6" width="1" height="1" fill="#fff"/><rect x="8" y="6" width="1" height="1" fill="#000"/><rect x="10" y="6" width="1" height="1" fill="#000"/><rect x="11" y="6" width="1" height="1" fill="#fff"/><rect x="12" y="6" width="1" height="1" fill="#000"/><rect x="2" y="7" width="1" height="1" fill="#000"/><rect x="3" y="7" width="1" height="1" fill="#fff"/><rect x="4" y="7" width="3" height="1" fill="#000"/><rect x="7" y="7" width="1" height="1" fill="#fff"/><rect x="8" y="7" width="3" height="1" fill="#000"/><rect x="11" y="7" width="1" height="1" fill="#fff"/><rect x="12" y="7" width="1" height="1" fill="#000"/><rect x="2" y="8" width="1" height="1" fill="#000"/><rect x="3" y="8" width="9" height="1" fill="#fff"/><rect x="12" y="8" width="1" height="1" fill="#000"/><rect x="2" y="9" width="5" height="1" fill="#000"/><rect x="7" y="9" width="1" height="1" fill="#fff"/><rect x="8" y="9" width="5" height="1" fill="#000"/><rect x="6" y="10" width="1" height="1" fill="#000"/><rect x="7" y="10" width="1" height="1" fill="#fff"/><rect x="8" y="10" width="1" height="1" fill="#000"/><rect x="5" y="11" width="2" height="1" fill="#000"/><rect x="7" y="11" width="1" height="1" fill="#fff"/><rect x="8" y="11" width="2" height="1" fill="#000"/><rect x="5" y="12" width="1" height="1" fill="#000"/><rect x="6" y="12" width="3" height="1" fill="#fff"/><rect x="9" y="12" width="1" height="1" fill="#000"/><rect x="5" y="13" width="2" height="1" fill="#000"/><rect x="7" y="13" width="1" height="1" fill="#fff"/><rect x="8" y="13" width="2" height="1" fill="#000"/><rect x="6" y="14" width="3" height="1" fill="#000"/></g></g>
<g transform="translate(102 222)"><rect x="0" y="0" width="16" height="16" rx="2" fill="#f79646"/><path d="M0.5 14V2.2Q0.5 0.5 2.2 0.5H14" fill="none" stroke="#fbbf8e" stroke-width="1"/><path d="M15.5 2V13.8Q15.5 15.5 13.8 15.5H2" fill="none" stroke="#b8692c" stroke-width="1"/><g shape-rendering="crispEdges"><rect x="6" y="1" width="3" height="1" fill="#000"/><rect x="2" y="2" width="5" height="1" fill="#000"/><rect x="7" y="2" width="1" height="1" fill="#fff"/><rect x="8" y="2" width="5" height="1" fill="#000"/><rect x="1" y="3" width="2" height="1" fill="#000"/><rect x="3" y="3" width="1" height="1" fill="#fff"/><rect x="4" y="3" width="2" height="1" fill="#000"/><rect x="6" y="3" width="3" height="1" fill="#fff"/><rect x="9" y="3" width="2" height="1" fill="#000"/><rect x="11" y="3" width="1" height="1" fill="#fff"/><rect x="12" y="3" width="2" height="1" fill="#000"/><rect x="1" y="4" width="1" height="1" fill="#000"/><rect x="2" y="4" width="3" height="1" fill="#fff"/><rect x="5" y="4" width="2" height="1" fill="#000"/><rect x="7" y="4" width="1" height="1" fill="#fff"/><rect x="8" y="4" width="2" height="1" fill="#000"/><rect x="10" y="4" width="3" height="1" fill="#fff"/><rect x="13" y="4" width="1" height="1" fill="#000"/><rect x="1" y="5" width="2" height="1" fill="#000"/><rect x="3" y="5" width="1" height="1" fill="#fff"/><rect x="4" y="5" width="3" height="1" fill="#000"/><rect x="7" y="5" width="1" height="1" fill="#fff"/><rect x="8" y="5" width="3" height="1" fill="#000"/><rect x="11" y="5" width="1" height="1" fill="#fff"/><rect x="12" y="5" width="2" height="1" fill="#000"/><rect x="2" y="6" width="1" height="1" fill="#000"/><rect x="3" y="6" width="1" height="1" fill="#fff"/><rect x="4" y="6" width="1" height="1" fill="#000"/><rect x="6" y="6" width="1" height="1" fill="#000"/><rect x="7" y="6" width="1" height="1" fill="#fff"/><rect x="8" y="6" width="1" height="1" fill="#000"/><rect x="10" y="6" width="1" height="1" fill="#000"/><rect x="11" y="6" width="1" height="1" fill="#fff"/><rect x="12" y="6" width="1" height="1" fill="#000"/><rect x="2" y="7" width="1" height="1" fill="#000"/><rect x="3" y="7" width="1" height="1" fill="#fff"/><rect x="4" y="7" width="3" height="1" fill="#000"/><rect x="7" y="7" width="1" height="1" fill="#fff"/><rect x="8" y="7" width="3" height="1" fill="#000"/><rect x="11" y="7" width="1" height="1" fill="#fff"/><rect x="12" y="7" width="1" height="1" fill="#000"/><rect x="2" y="8" width="1" height="1" fill="#000"/><rect x="3" y="8" width="9" height="1" fill="#fff"/><rect x="12" y="8" width="1" height="1" fill="#000"/><rect x="2" y="9" width="5" height="1" fill="#000"/><rect x="7" y="9" width="1" height="1" fill="#fff"/><rect x="8" y="9" width="5" height="1" fill="#000"/><rect x="6" y="10" width="1" height="1" fill="#000"/><rect x="7" y="10" width="1" height="1" fill="#fff"/><rect x="8" y="10" width="1" height="1" fill="#000"/><rect x="5" y="11" width="2" height="1" fill="#000"/><rect x="7" y="11" width="1" height="1" fill="#fff"/><rect x="8" y="11" width="2" height="1" fill="#000"/><rect x="5" y="12" width="1" height="1" fill="#000"/><rect x="6" y="12" width="3" height="1" fill="#fff"/><rect x="9" y="12" width="1" height="1" fill="#000"/><rect x="5" y="13" width="2" height="1" fill="#000"/><rect x="7" y="13" width="1" height="1" fill="#fff"/><rect x="8" y="13" width="2" height="1" fill="#000"/><rect x="6" y="14" width="3" height="1" fill="#000"/></g></g>
<g transform="translate(126 246)"><rect x="0" y="0" width="16" height="16" rx="2" fill="#f79646"/><path d="M0.5 14V2.2Q0.5 0.5 2.2 0.5H14" fill="none" stroke="#fbbf8e" stroke-width="1"/><path d="M15.5 2V13.8Q15.5 15.5 13.8 15.5H2" fill="none" stroke="#b8692c" stroke-width="1"/><g shape-rendering="crispEdges"><rect x="6" y="1" width="3" height="1" fill="#000"/><rect x="2" y="2" width="5" height="1" fill="#000"/><rect x="7" y="2" width="1" height="1" fill="#fff"/><rect x="8" y="2" width="5" height="1" fill="#000"/><rect x="1" y="3" width="2" height="1" fill="#000"/><rect x="3" y="3" width="1" height="1" fill="#fff"/><rect x="4" y="3" width="2" height="1" fill="#000"/><rect x="6" y="3" width="3" height="1" fill="#fff"/><rect x="9" y="3" width="2" height="1" fill="#000"/><rect x="11" y="3" width="1" height="1" fill="#fff"/><rect x="12" y="3" width="2" height="1" fill="#000"/><rect x="1" y="4" width="1" height="1" fill="#000"/><rect x="2" y="4" width="3" height="1" fill="#fff"/><rect x="5" y="4" width="2" height="1" fill="#000"/><rect x="7" y="4" width="1" height="1" fill="#fff"/><rect x="8" y="4" width="2" height="1" fill="#000"/><rect x="10" y="4" width="3" height="1" fill="#fff"/><rect x="13" y="4" width="1" height="1" fill="#000"/><rect x="1" y="5" width="2" height="1" fill="#000"/><rect x="3" y="5" width="1" height="1" fill="#fff"/><rect x="4" y="5" width="3" height="1" fill="#000"/><rect x="7" y="5" width="1" height="1" fill="#fff"/><rect x="8" y="5" width="3" height="1" fill="#000"/><rect x="11" y="5" width="1" height="1" fill="#fff"/><rect x="12" y="5" width="2" height="1" fill="#000"/><rect x="2" y="6" width="1" height="1" fill="#000"/><rect x="3" y="6" width="1" height="1" fill="#fff"/><rect x="4" y="6" width="1" height="1" fill="#000"/><rect x="6" y="6" width="1" height="1" fill="#000"/><rect x="7" y="6" width="1" height="1" fill="#fff"/><rect x="8" y="6" width="1" height="1" fill="#000"/><rect x="10" y="6" width="1" height="1" fill="#000"/><rect x="11" y="6" width="1" height="1" fill="#fff"/><rect x="12" y="6" width="1" height="1" fill="#000"/><rect x="2" y="7" width="1" height="1" fill="#000"/><rect x="3" y="7" width="1" height="1" fill="#fff"/><rect x="4" y="7" width="3" height="1" fill="#000"/><rect x="7" y="7" width="1" height="1" fill="#fff"/><rect x="8" y="7" width="3" height="1" fill="#000"/><rect x="11" y="7" width="1" height="1" fill="#fff"/><rect x="12" y="7" width="1" height="1" fill="#000"/><rect x="2" y="8" width="1" height="1" fill="#000"/><rect x="3" y="8" width="9" height="1" fill="#fff"/><rect x="12" y="8" width="1" height="1" fill="#000"/><rect x="2" y="9" width="5" height="1" fill="#000"/><rect x="7" y="9" width="1" height="1" fill="#fff"/><rect x="8" y="9" width="5" height="1" fill="#000"/><rect x="6" y="10" width="1" height="1" fill="#000"/><rect x="7" y="10" width="1" height="1" fill="#fff"/><rect x="8" y="10" width="1" height="1" fill="#000"/><rect x="5" y="11" width="2" height="1" fill="#000"/><rect x="7" y="11" width="1" height="1" fill="#fff"/><rect x="8" y="11" width="2" height="1" fill="#000"/><rect x="5" y="12" width="1" height="1" fill="#000"/><rect x="6" y="12" width="3" height="1" fill="#fff"/><rect x="9" y="12" width="1" height="1" fill="#000"/><rect x="5" y="13" width="2" height="1" fill="#000"/><rect x="7" y="13" width="1" height="1" fill="#fff"/><rect x="8" y="13" width="2" height="1" fill="#000"/><rect x="6" y="14" width="3" height="1" fill="#000"/></g></g>
<g transform="translate(126 441)"><rect x="0" y="0" width="16" height="16" rx="2" fill="#f79646"/><path d="M0.5 14V2.2Q0.5 0.5 2.2 0.5H14" fill="none" stroke="#fbbf8e" stroke-width="1"/><path d="M15.5 2V13.8Q15.5 15.5 13.8 15.5H2" fill="none" stroke="#b8692c" stroke-width="1"/><text x="1.1" y="12" font-size="11.5" textLength="4.6" font-family="Liberation Mono,monospace" font-weight="bold" fill="#fff" stroke="#000" stroke-width="2" paint-order="stroke" stroke-linejoin="miter" lengthAdjust="spacingAndGlyphs">I</text><text x="5.8" y="8" font-size="8.5" textLength="3.4" font-family="Liberation Mono,monospace" font-weight="bold" fill="#fff" stroke="#000" stroke-width="2" paint-order="stroke" stroke-linejoin="miter" lengthAdjust="spacingAndGlyphs">2</text><text x="9.6" y="12" font-size="11.5" textLength="3.9" font-family="Liberation Mono,monospace" font-weight="bold" fill="#fff" stroke="#000" stroke-width="2" paint-order="stroke" stroke-linejoin="miter" lengthAdjust="spacingAndGlyphs">C</text></g>
<g transform="translate(102 466)"><rect x="0" y="0" width="16" height="16" rx="2" fill="#f79646"/><path d="M0.5 14V2.2Q0.5 0.5 2.2 0.5H14" fill="none" stroke="#fbbf8e" stroke-width="1"/><path d="M15.5 2V13.8Q15.5 15.5 13.8 15.5H2" fill="none" stroke="#b8692c" stroke-width="1"/><text x="1.1" y="12" font-size="11.5" textLength="4.6" font-family="Liberation Mono,monospace" font-weight="bold" fill="#fff" stroke="#000" stroke-width="2" paint-order="stroke" stroke-linejoin="miter" lengthAdjust="spacingAndGlyphs">I</text><text x="5.8" y="8" font-size="8.5" textLength="3.4" font-family="Liberation Mono,monospace" font-weight="bold" fill="#fff" stroke="#000" stroke-width="2" paint-order="stroke" stroke-linejoin="miter" lengthAdjust="spacingAndGlyphs">2</text><text x="9.6" y="12" font-size="11.5" textLength="3.9" font-family="Liberation Mono,monospace" font-weight="bold" fill="#fff" stroke="#000" stroke-width="2" paint-order="stroke" stroke-linejoin="miter" lengthAdjust="spacingAndGlyphs">C</text></g>
<g transform="translate(398 290)"><rect x="0" y="0" width="16" height="16" rx="2" fill="#f79646"/><path d="M0.5 14V2.2Q0.5 0.5 2.2 0.5H14" fill="none" stroke="#fbbf8e" stroke-width="1"/><path d="M15.5 2V13.8Q15.5 15.5 13.8 15.5H2" fill="none" stroke="#b8692c" stroke-width="1"/><path d="M1.3 7.9Q2.5 4.2 4 4.2Q5.4 4.2 6.4 7.3Q7.6 10.8 9 10.8Q10 10.8 10.7 9.2" fill="none" stroke="#000" stroke-width="1.25" stroke-linecap="round"/><path d="M12.5 1.2V4.7M11 2.5H12.5M12.5 10.3V13.9M11 11.5H12.5" fill="none" stroke="#000" stroke-width="1"/><circle cx="12.5" cy="7.5" r="1.15" fill="none" stroke="#000" stroke-width="0.9"/></g>
<g transform="translate(468 290)"><defs><clipPath id="ccb"><circle cx="8" cy="8" r="7.9"/></clipPath><linearGradient id="gcb" x1="0" y1="0" x2="0.6" y2="0.8"><stop offset="0" stop-color="#d0d0d0"/><stop offset="1" stop-color="#808080"/></linearGradient></defs><g clip-path="url(#ccb)"><rect width="16" height="16" fill="#000"/><path d="M0 0H10.4L0.4 11.6H0Z" fill="url(#gcb)"/><path d="M9.8 0.4L12 1V3.8H10.8V2.2H9.8Z" fill="#0a8a90"/><path d="M12 1L15.4 3.6L15.8 6H14.6V4.6L12 3.4Z" fill="#0a8a0a"/><rect x="15" y="10" width="1" height="1.4" fill="#0a8a0a"/><path d="M0.8 10.8L2.8 10.4V12L4.8 13.2L3 14.4Z" fill="#0a8a90"/><path d="M2.8 14L5 12.8V14L3.8 15Z" fill="#0a8a0a"/></g><g shape-rendering="crispEdges"><rect x="4" y="4" width="8" height="8" fill="#000"/><path d="M5 5H10V6H9V7H8V8H7V9H6V10H5Z" fill="#a8a8a8"/><rect x="5" y="5" width="1" height="1" fill="#fff"/><g fill="#fff"><rect x="4" y="3" width="1" height="1"/><rect x="3" y="5" width="1" height="1"/><rect x="12" y="4" width="2" height="1"/><rect x="5" y="12" width="1" height="2"/><rect x="6" y="3" width="1" height="1"/><rect x="3" y="7" width="1" height="1"/><rect x="12" y="6" width="2" height="1"/><rect x="7" y="12" width="1" height="2"/><rect x="8" y="3" width="1" height="1"/><rect x="3" y="9" width="1" height="1"/><rect x="12" y="8" width="2" height="1"/><rect x="9" y="12" width="1" height="2"/><rect x="10" y="3" width="1" height="1"/><rect x="3" y="11" width="1" height="1"/><rect x="12" y="10" width="2" height="1"/><rect x="11" y="12" width="1" height="2"/></g><g fill="#0a8a0a"><rect x="12" y="5" width="1.6" height="1"/><rect x="12" y="7" width="1.6" height="1"/><rect x="6" y="12" width="1" height="1"/></g></g></g>
<g transform="translate(328 334)"><defs><clipPath id="cga"><circle cx="8" cy="8" r="7.8"/></clipPath></defs><g clip-path="url(#cga)"><rect width="16" height="16" fill="#000080"/><path d="M10.8 0C11 4 10.4 7 8.8 8.8C7.4 10.4 5.6 11.6 4.6 12H0V0Z" fill="#0000ff"/></g><g shape-rendering="crispEdges"><path d="M3 4H6V7H4V6H3Z" fill="#c8c284"/><g fill="#ffffc8"><rect x="2" y="9" width="2" height="2"/><rect x="5" y="9" width="2" height="2"/><rect x="8" y="9" width="2" height="2"/><rect x="11" y="9" width="2" height="2"/></g></g></g>
<g transform="translate(398 334)"><defs><clipPath id="cgb"><circle cx="8" cy="8" r="7.8"/></clipPath></defs><g clip-path="url(#cgb)"><rect width="16" height="16" fill="#000080"/><path d="M10.8 0C11 4 10.4 7 8.8 8.8C7.4 10.4 5.6 11.6 4.6 12H0V0Z" fill="#0000ff"/></g><g shape-rendering="crispEdges"><path d="M3 4H6V7H4V6H3Z" fill="#c8c284"/><g fill="#ffffc8"><rect x="2" y="9" width="2" height="2"/><rect x="5" y="9" width="2" height="2"/><rect x="8" y="9" width="2" height="2"/><rect x="11" y="9" width="2" height="2"/></g></g></g>
<g transform="translate(468 334)"><rect x="0" y="0" width="16" height="16" rx="2" fill="#f79646"/><path d="M0.5 14V2.2Q0.5 0.5 2.2 0.5H14" fill="none" stroke="#fbbf8e" stroke-width="1"/><path d="M15.5 2V13.8Q15.5 15.5 13.8 15.5H2" fill="none" stroke="#b8692c" stroke-width="1"/><text x="1.1" y="12" font-size="11.5" textLength="4.6" font-family="Liberation Mono,monospace" font-weight="bold" fill="#fff" stroke="#000" stroke-width="2" paint-order="stroke" stroke-linejoin="miter" lengthAdjust="spacingAndGlyphs">I</text><text x="5.8" y="8" font-size="8.5" textLength="3.4" font-family="Liberation Mono,monospace" font-weight="bold" fill="#fff" stroke="#000" stroke-width="2" paint-order="stroke" stroke-linejoin="miter" lengthAdjust="spacingAndGlyphs">2</text><text x="9.6" y="12" font-size="11.5" textLength="3.9" font-family="Liberation Mono,monospace" font-weight="bold" fill="#fff" stroke="#000" stroke-width="2" paint-order="stroke" stroke-linejoin="miter" lengthAdjust="spacingAndGlyphs">C</text></g>
<g transform="translate(538 334)"><defs><linearGradient id="gib" x1="0" x2="1" y1="0" y2="0.25"><stop offset="0" stop-color="#3cbcff"/><stop offset="0.6" stop-color="#22a8f2"/><stop offset="0.72" stop-color="#0f86dc"/><stop offset="1" stop-color="#0a6ad0"/></linearGradient></defs><circle cx="8" cy="8" r="7.7" fill="url(#gib)"/><g shape-rendering="crispEdges"><g fill="#000"><rect x="5" y="3" width="1" height="5"/><rect x="8" y="3" width="4" height="5"/><rect x="5" y="10" width="4" height="4"/><rect x="11" y="10" width="1" height="4"/></g><g fill="#fff"><rect x="4" y="2" width="1" height="5"/><rect x="7" y="2" width="4" height="5"/><rect x="4" y="9" width="4" height="4"/><rect x="10" y="9" width="1" height="4"/></g><rect x="8" y="3" width="2" height="3" fill="#000"/><rect x="9" y="4" width="1" height="2" fill="#22a8f2"/><rect x="5" y="10" width="2" height="2" fill="#000"/><rect x="6" y="11" width="1" height="1" fill="#22a8f2"/></g></g>
<g transform="translate(328 378)"><rect x="0" y="0" width="16" height="16" rx="2" fill="#f79646"/><path d="M0.5 14V2.2Q0.5 0.5 2.2 0.5H14" fill="none" stroke="#fbbf8e" stroke-width="1"/><path d="M15.5 2V13.8Q15.5 15.5 13.8 15.5H2" fill="none" stroke="#b8692c" stroke-width="1"/><path d="M4.6 6.4H11.4L12.5 9V12.5H3.5V9Z" fill="#fff" stroke="#000" stroke-width="1" stroke-linejoin="round"/><path d="M3.2 3.5H12.6L14.5 5.4V6.6L13.2 7.7H11.7L11.4 6.4H4.6L4.3 7.7H2.8L1.5 6.6V5.4Z" fill="#fff" stroke="#000" stroke-width="1" stroke-linejoin="round"/><ellipse cx="7.9" cy="9.6" rx="1.9" ry="1.35" fill="#fff" stroke="#000" stroke-width="0.9"/></g>
<g transform="translate(468 378)"><defs><linearGradient id="gic" x1="0" x2="1" y1="0" y2="0.25"><stop offset="0" stop-color="#3cbcff"/><stop offset="0.6" stop-color="#22a8f2"/><stop offset="0.72" stop-color="#0f86dc"/><stop offset="1" stop-color="#0a6ad0"/></linearGradient></defs><circle cx="8" cy="8" r="7.7" fill="url(#gic)"/><g shape-rendering="crispEdges"><g fill="#000"><rect x="5" y="3" width="1" height="5"/><rect x="8" y="3" width="4" height="5"/><rect x="5" y="10" width="4" height="4"/><rect x="11" y="10" width="1" height="4"/></g><g fill="#fff"><rect x="4" y="2" width="1" height="5"/><rect x="7" y="2" width="4" height="5"/><rect x="4" y="9" width="4" height="4"/><rect x="10" y="9" width="1" height="4"/></g><rect x="8" y="3" width="2" height="3" fill="#000"/><rect x="9" y="4" width="1" height="2" fill="#22a8f2"/><rect x="5" y="10" width="2" height="2" fill="#000"/><rect x="6" y="11" width="1" height="1" fill="#22a8f2"/></g></g>
<g transform="translate(328 400)"><rect x="0" y="0" width="16" height="16" rx="2" fill="#f79646"/><path d="M0.5 14V2.2Q0.5 0.5 2.2 0.5H14" fill="none" stroke="#fbbf8e" stroke-width="1"/><path d="M15.5 2V13.8Q15.5 15.5 13.8 15.5H2" fill="none" stroke="#b8692c" stroke-width="1"/><path d="M4.6 6.4H11.4L12.5 9V12.5H3.5V9Z" fill="#fff" stroke="#000" stroke-width="1" stroke-linejoin="round"/><path d="M3.2 3.5H12.6L14.5 5.4V6.6L13.2 7.7H11.7L11.4 6.4H4.6L4.3 7.7H2.8L1.5 6.6V5.4Z" fill="#fff" stroke="#000" stroke-width="1" stroke-linejoin="round"/><ellipse cx="7.9" cy="9.6" rx="1.9" ry="1.35" fill="#fff" stroke="#000" stroke-width="0.9"/></g>
</svg>
<div class="t" style="left:28px;top:6px;"><span class="s" style="transform:scaleX(0.9913)">*Component Inspector - CI2C1</span></div>
<div class="t" style="left:219px;top:6px;"><span class="s" style="transform:scaleX(0.9904)">Components Library</span></div>
<div class="t" style="left:355.3px;top:6px;"><span class="s" style="transform:scaleX(0.9396)">*Processor</span></div>
<div class="t" style="left:475px;top:6px;"><span class="s" style="transform:scaleX(1.0223)">Memory Map</span></div>
<div class="t" style="left:575px;top:6px;"><span class="s" style="transform:scaleX(0.9908)">Configuration Registers</span></div>
<div class="t" style="left:727px;top:6px;"><span class="s" style="transform:scaleX(1.0408)">Outline</span></div>
<div class="t" style="left:584.8px;top:31px;"><span class="s" style="transform:scaleX(0.9503)">Generate Code</span></div>
<div class="t" style="left:694px;top:31px;"><span class="s" style="transform:scaleX(0.9415)">Select Package</span></div>
<div class="t" style="left:275.6px;top:291px;"><span class="s" style="transform:scaleX(0.9464)">ACMP0</span></div>
<div class="t" style="left:345.6px;top:291px;"><span class="s" style="transform:scaleX(0.9464)">ACMP1</span></div>
<div class="t" style="left:415.6px;top:291px;"><span class="s" style="transform:scaleX(0.9309)">ADC</span></div>
<div class="t" style="left:485.6px;top:291px;"><span class="s" style="transform:scaleX(0.8839)">CPU</span></div>
<div class="t" style="left:555.6px;top:291px;"><span class="s" style="transform:scaleX(0.8479)">CRC</span></div>
<div class="t" style="left:275.6px;top:313px;"><span class="s" style="transform:scaleX(0.9607)">DAC6b0</span></div>
<div class="t" style="left:345.6px;top:313px;"><span class="s" style="transform:scaleX(0.9607)">DAC6b1</span></div>
<div class="t" style="left:415.6px;top:313px;"><span class="s" style="transform:scaleX(0.9379)">FTM0</span></div>
<div class="t" style="left:485.6px;top:313px;"><span class="s" style="transform:scaleX(0.9379)">FTM1</span></div>
<div class="t" style="left:555.6px;top:313px;"><span class="s" style="transform:scaleX(0.9379)">FTM2</span></div>
<div class="t" style="left:275.6px;top:335px;"><span class="s" style="transform:scaleX(0.9198)">FTMRH</span></div>
<div class="t" style="left:345.6px;top:335px;"><span class="s" style="transform:scaleX(0.9191)">GPIOA</span></div>
<div class="t" style="left:415.6px;top:335px;"><span class="s" style="transform:scaleX(0.8964)">GPIOB</span></div>
<div class="t" style="left:485.6px;top:335px;"><span class="s" style="transform:scaleX(0.9295)">I2C0</span></div>
<div class="t" style="left:555.6px;top:335px;"><span class="s" style="transform:scaleX(0.9105)">IRQ</span></div>
<div class="t" style="left:275.6px;top:357px;"><span class="s" style="transform:scaleX(0.9034)">KBI0</span></div>
<div class="t" style="left:345.6px;top:357px;"><span class="s" style="transform:scaleX(0.9034)">KBI1</span></div>
<div class="t" style="left:415.6px;top:357px;"><span class="s" style="transform:scaleX(1.0108)">MCM</span></div>
<div class="t" style="left:485.6px;top:357px;"><span class="s" style="transform:scaleX(0.8679)">PIT</span></div>
<div class="t" style="left:555.6px;top:357px;"><span class="s" style="transform:scaleX(0.8829)">PORT</span></div>
<div class="t" style="left:275.6px;top:379px;"><span class="s" style="transform:scaleX(0.8550)">RTC</span></div>
<div class="t" style="left:345.6px;top:379px;"><span class="s" style="transform:scaleX(0.8748)">SPI0</span></div>
<div class="t" style="left:415.6px;top:379px;"><span class="s" style="transform:scaleX(0.8748)">SPI1</span></div>
<div class="t" style="left:485.6px;top:379px;"><span class="s" style="transform:scaleX(0.9133)">SysTick</span></div>
<div class="t" style="left:555.6px;top:379px;"><span class="s" style="transform:scaleX(0.9182)">UART0</span></div>
<div class="t" style="left:275.6px;top:401px;"><span class="s" style="transform:scaleX(0.9182)">UART1</span></div>
<div class="t" style="left:345.6px;top:401px;"><span class="s" style="transform:scaleX(0.9182)">UART2</span></div>
<div class="t" style="left:415.6px;top:401px;"><span class="s" style="transform:scaleX(0.9545)">WDOG</span></div>
<div class="pl " style="left:190px;top:199px;width:48px"><span class="s" style="transform:scaleX(0.9277)">PTD1/KB</span></div>
<div class="pl " style="left:625.6px;top:198px;width:48.4px"><span class="s" style="transform:scaleX(0.9229)">PTA2/KBI</span></div>
<div class="pl v" style="left:243px;top:190px;width:46.5px"><span class="s" style="transform:scaleX(0.9945)">PTA4/AC</span></div>
<div class="pl v" style="left:244px;top:625px;width:47px"><span class="s" style="transform:scaleX(0.8512)">PTE5</span></div>
<div class="pl " style="left:190px;top:223px;width:48px"><span class="s" style="transform:scaleX(0.9277)">PTD0/KB</span></div>
<div class="pl " style="left:625.6px;top:223px;width:48.4px"><span class="s" style="transform:scaleX(0.9229)">PTA3/KBI</span></div>
<div class="pl v" style="left:268px;top:190px;width:46.5px"><span class="s" style="transform:scaleX(0.9912)">PTA5/IRQ</span></div>
<div class="pl v" style="left:268px;top:625px;width:47px"><span class="s" style="transform:scaleX(0.9368)">PTB5/FT</span></div>
<div class="pl " style="left:190px;top:247px;width:48px"><span class="s" style="transform:scaleX(0.9518)">PTH7</span></div>
<div class="pl " style="left:625.6px;top:247px;width:47.3px"><span class="s" style="transform:scaleX(0.9277)">PTD2/KB</span></div>
<div class="pl v" style="left:292px;top:190px;width:46.5px"><span class="s" style="transform:scaleX(0.9409)">PTC4/RTC</span></div>
<div class="pl v" style="left:292px;top:625px;width:47px"><span class="s" style="transform:scaleX(0.9368)">PTB4/FT</span></div>
<div class="pl " style="left:190px;top:272px;width:48px"><span class="s" style="transform:scaleX(0.9518)">PTH6</span></div>
<div class="pl " style="left:625.6px;top:272px;width:47.3px"><span class="s" style="transform:scaleX(0.9277)">PTD3/KB</span></div>
<div class="pl v" style="left:317px;top:190px;width:46.5px"><span class="s" style="transform:scaleX(0.9354)">PTC5/FT</span></div>
<div class="pl v" style="left:317px;top:625px;width:47px"><span class="s" style="transform:scaleX(0.9354)">PTC3/FT</span></div>
<div class="pl " style="left:190px;top:296px;width:48px"><span class="s" style="transform:scaleX(0.8825)">PTE7/FTM</span></div>
<div class="pl " style="left:625.6px;top:296px;width:47.3px"><span class="s" style="transform:scaleX(0.9277)">PTD4/KB</span></div>
<div class="pl v" style="left:341px;top:190px;width:46.5px"><span class="s" style="transform:scaleX(0.9168)">PTE0/SPI</span></div>
<div class="pl v" style="left:341px;top:625px;width:47px"><span class="s" style="transform:scaleX(0.9354)">PTC2/FT</span></div>
<div class="pl " style="left:190px;top:320px;width:48px"><span class="s" style="transform:scaleX(0.9430)">PTH2/BU</span></div>
<div class="pl r" style="left:625.6px;top:320px;width:47.3px"><span class="s" style="transform:scaleX(0.8977)">PTF0</span></div>
<div class="pl v" style="left:365px;top:190px;width:46.5px"><span class="s" style="transform:scaleX(0.9168)">PTE1/SPI</span></div>
<div class="pl v" style="left:365px;top:625px;width:47px"><span class="s" style="transform:scaleX(0.9637)">PTD7/KB</span></div>
<div class="pl " style="left:190px;top:345px;width:48px"><span class="s" style="transform:scaleX(0.9140)">VDD1</span></div>
<div class="pl r" style="left:625.6px;top:345px;width:47.3px"><span class="s" style="transform:scaleX(0.8977)">PTF1</span></div>
<div class="pl v" style="left:390px;top:190px;width:46.5px;text-indent:20.30px"><span class="s" style="transform:scaleX(0.8841)">PTG0</span></div>
<div class="pl v" style="left:390px;top:625px;width:47px"><span class="s" style="transform:scaleX(0.9637)">PTD6/KB</span></div>
<div class="pl " style="left:190px;top:369px;width:48px"><span class="s" style="transform:scaleX(0.9548)">VDDA/VR</span></div>
<div class="pl r" style="left:625.6px;top:369px;width:47.3px"><span class="s" style="transform:scaleX(0.9140)">VDD2</span></div>
<div class="pl v" style="left:414px;top:190px;width:46.5px;text-indent:20.30px"><span class="s" style="transform:scaleX(0.8841)">PTG1</span></div>
<div class="pl v" style="left:414px;top:625px;width:47px"><span class="s" style="transform:scaleX(0.9637)">PTD5/KB</span></div>
<div class="pl " style="left:190px;top:394px;width:48px"><span class="s" style="transform:scaleX(0.8605)">VSSA/VRE</span></div>
<div class="pl r" style="left:625.6px;top:394px;width:47.3px"><span class="s" style="transform:scaleX(0.8596)">VSS2</span></div>
<div class="pl v" style="left:439px;top:190px;width:46.5px;text-indent:20.30px"><span class="s" style="transform:scaleX(0.8841)">PTG2</span></div>
<div class="pl v" style="left:439px;top:625px;width:47px"><span class="s" style="transform:scaleX(0.9354)">PTC1/FT</span></div>
<div class="pl " style="left:190px;top:418px;width:48px"><span class="s" style="transform:scaleX(0.7781)">VSS1</span></div>
<div class="pl r" style="left:625.6px;top:418px;width:47.3px"><span class="s" style="transform:scaleX(0.8746)">PTE4</span></div>
<div class="pl v" style="left:463px;top:190px;width:46.5px;text-indent:20.30px"><span class="s" style="transform:scaleX(0.8841)">PTG3</span></div>
<div class="pl v" style="left:463px;top:625px;width:47px"><span class="s" style="transform:scaleX(0.9354)">PTC0/FT</span></div>
<div class="pl " style="left:190px;top:442px;width:48px"><span class="s" style="transform:scaleX(0.9250)">PTB7/I2C</span></div>
<div class="pl " style="left:625.6px;top:442px;width:47.3px"><span class="s" style="transform:scaleX(0.9346)">PTA6/FTM</span></div>
<div class="pl v" style="left:487px;top:190px;width:46.5px"><span class="s" style="transform:scaleX(0.9168)">PTE2/SPI</span></div>
<div class="pl v" style="left:487px;top:625px;width:47px"><span class="s" style="transform:scaleX(0.9720)">PTF7/AD</span></div>
<div class="pl " style="left:190px;top:467px;width:48px"><span class="s" style="transform:scaleX(0.9250)">PTB6/I2C</span></div>
<div class="pl " style="left:625.6px;top:467px;width:47.3px"><span class="s" style="transform:scaleX(0.9346)">PTA7/FTM</span></div>
<div class="pl v" style="left:512px;top:190px;width:46.5px"><span class="s" style="transform:scaleX(0.9168)">PTE3/SPI</span></div>
<div class="pl v" style="left:512px;top:625px;width:47px"><span class="s" style="transform:scaleX(0.9720)">PTF6/AD</span></div>
<div class="pl " style="left:190px;top:491px;width:48px"><span class="s" style="transform:scaleX(0.7781)">VSS3</span></div>
<div class="pl r" style="left:625.6px;top:491px;width:47.3px"><span class="s" style="transform:scaleX(0.8977)">PTF2</span></div>
<div class="pl v" style="left:536px;top:190px;width:46.5px"><span class="s" style="transform:scaleX(0.9753)">PTC6/UA</span></div>
<div class="pl v" style="left:536px;top:625px;width:47px"><span class="s" style="transform:scaleX(0.9720)">PTF5/AD</span></div>
<div class="pl " style="left:190px;top:515px;width:48px"><span class="s" style="transform:scaleX(0.9516)">PTH1/FT</span></div>
<div class="pl r" style="left:625.6px;top:515px;width:47.3px"><span class="s" style="transform:scaleX(0.8977)">PTF3</span></div>
<div class="pl v" style="left:560px;top:190px;width:46.5px"><span class="s" style="transform:scaleX(0.9753)">PTC7/UA</span></div>
<div class="pl v" style="left:560px;top:625px;width:47px"><span class="s" style="transform:scaleX(0.9720)">PTF4/AD</span></div>
<div class="pl " style="left:190px;top:540px;width:48px"><span class="s" style="transform:scaleX(0.9516)">PTH0/FT</span></div>
<div class="pl " style="left:625.6px;top:540px;width:48.4px"><span class="s" style="transform:scaleX(0.8888)">PTB0/KBI</span></div>
<div class="pl v" style="left:585px;top:190px;width:46.5px"><span class="s" style="transform:scaleX(0.9807)">PTA0/KB</span></div>
<div class="pl v" style="left:585px;top:625px;width:47px"><span class="s" style="transform:scaleX(0.9455)">PTB3/KB</span></div>
<div class="pl " style="left:190px;top:564px;width:48px"><span class="s" style="transform:scaleX(0.8846)">PTE6</span></div>
<div class="pl " style="left:625.6px;top:564px;width:48.4px"><span class="s" style="transform:scaleX(0.8888)">PTB1/KBI</span></div>
<div class="pl v" style="left:609px;top:190px;width:46.5px"><span class="s" style="transform:scaleX(0.9807)">PTA1/KB</span></div>
<div class="pl v" style="left:609px;top:625px;width:47px"><span class="s" style="transform:scaleX(0.9455)">PTB2/KB</span></div>
<div class="big" style="left:357.4px;top:506px"><span class="s" style="transform:scaleX(0.9564)">MKE02Z64VLH2</span></div>
</body></html>
